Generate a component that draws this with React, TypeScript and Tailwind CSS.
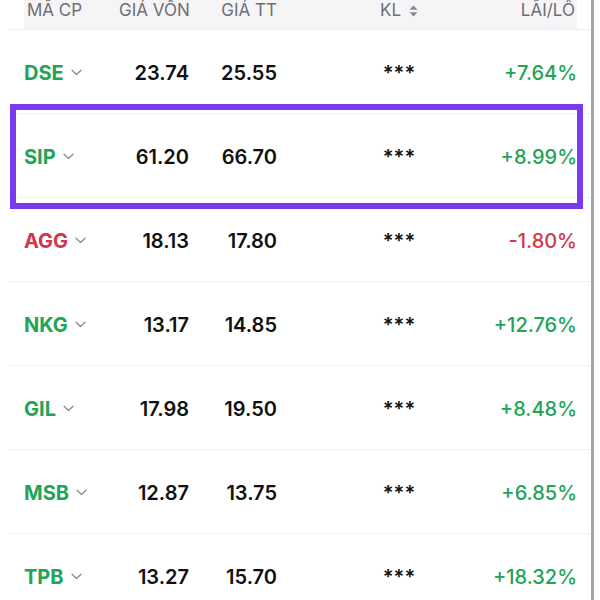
import React from "react";

type Row = { sym: string; cost: string; price: string; pct: string; up: boolean };

const rows: Row[] = [
  { sym: "DSE", cost: "23.74", price: "25.55", pct: "+7.64%", up: true },
  { sym: "SIP", cost: "61.20", price: "66.70", pct: "+8.99%", up: true },
  { sym: "AGG", cost: "18.13", price: "17.80", pct: "-1.80%", up: false },
  { sym: "NKG", cost: "13.17", price: "14.85", pct: "+12.76%", up: true },
  { sym: "GIL", cost: "17.98", price: "19.50", pct: "+8.48%", up: true },
  { sym: "MSB", cost: "12.87", price: "13.75", pct: "+6.85%", up: true },
  { sym: "TPB", cost: "13.27", price: "15.70", pct: "+18.32%", up: true },
];

function Chevron() {
  return (
    <svg width="11" height="7" viewBox="0 0 11 7" className="ml-[7px] mt-[-2px]">
      <path d="M1 1.2 L5.5 5.5 L10 1.2" fill="none" stroke="#8a8a8e" strokeWidth="1.3" strokeLinecap="round" strokeLinejoin="round" />
    </svg>
  );
}

function SortIcon() {
  return (
    <svg width="9" height="12" viewBox="0 0 9 12" className="ml-[8px]">
      <path d="M4.5 0.5 L8.5 4.8 L0.5 4.8 Z" fill="#8a8a8e" />
      <path d="M4.5 11.5 L8.5 7.2 L0.5 7.2 Z" fill="#8a8a8e" />
    </svg>
  );
}

export default function App() {
  return (
    <div
      className="relative w-[600px] h-[600px] overflow-hidden bg-white flex"
      style={{ fontFamily: "Inter, 'Noto Sans', sans-serif" }}
    >
      <div className="w-[591px] flex flex-col">
        {/* header */}
        <div className="ml-[8px] w-[582px] border-b border-[#efeff1]">
          <div className="ml-[16px] w-[553px] h-[29px] bg-[#f5f5f8] flex items-start text-[17px] leading-[21px] text-[#6e6e73]">
            <div className="w-[95px] pl-[3px]">MÃ CP</div>
            <div className="w-[70px] text-right whitespace-nowrap">GIÁ VỐN</div>
            <div className="w-[88px] text-right whitespace-nowrap">GIÁ TT</div>
            <div className="ml-[42px] w-[160px] flex justify-center items-center h-[21px]">
              <span>KL</span>
              <SortIcon />
            </div>
            <div className="flex-1 flex justify-end pr-[2px] whitespace-nowrap">LÃI/LÔ</div>
          </div>
        </div>
        {rows.map((r) => (
          <div key={r.sym} className="ml-[8px] w-[582px] h-[84px] shrink-0 border-b border-[#f0f0f2]">
            <div className="ml-[16px] w-[553px] h-[83px] pt-[3px] flex items-center text-[20px]">
              <div className="w-[95px] flex items-center">
                <span className={`font-bold ${r.up ? "text-[#23a357]" : "text-[#d2364b]"}`}>{r.sym}</span>
                <Chevron />
              </div>
              <div className="w-[70px] text-right font-semibold text-[#111111]">{r.cost}</div>
              <div className="w-[88px] text-right font-semibold text-[#111111]">{r.price}</div>
              <div className="ml-[42px] w-[160px] text-center font-semibold text-[#111111]">***</div>
              <div className={`flex-1 flex justify-end whitespace-nowrap font-medium ${r.up ? "text-[#23a357]" : "text-[#d2364b]"}`}>
                {r.pct}
              </div>
            </div>
          </div>
        ))}
      </div>
      {/* scrollbar line */}
      <div className="w-[3px] h-full bg-[#a6a6a8]" />
      <div className="flex-1" />

      {/* highlight box */}
      <div className="absolute left-[10px] top-[104px] w-[573px] h-[105px] border-[6px] border-[#7b3aed]" />
    </div>
  );
}
